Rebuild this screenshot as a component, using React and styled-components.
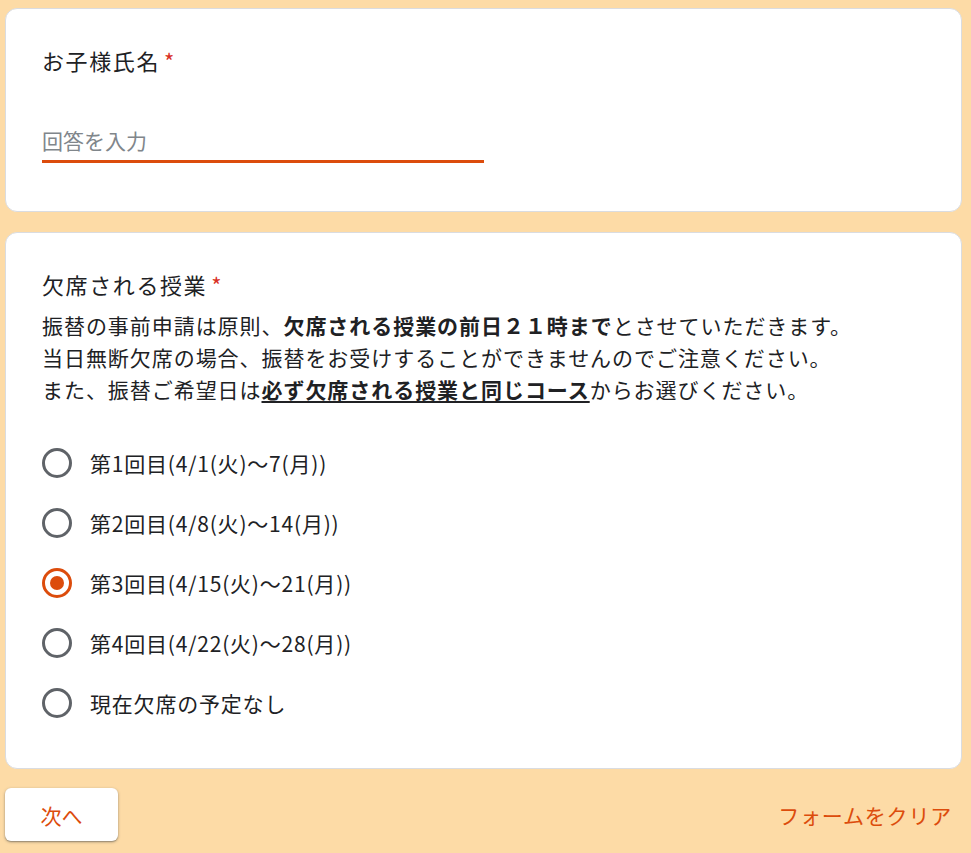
import React, { useState } from 'react';
import styled, { createGlobalStyle } from 'styled-components';

const ACCENT = '#dc4c0c';

const GlobalStyle = createGlobalStyle`
  html, body {
    margin: 0;
    padding: 0;
    background: #fddba6;
  }
  body {
    font-family: "Noto Sans CJK JP", "Noto Sans", sans-serif;
    color: #202124;
  }
`;

const Page = styled.div`
  display: flex;
  flex-direction: column;
  gap: 20px;
  padding: 8px 9px 12px 5px;
`;

const Card = styled.section`
  background: #fff;
  border: 1px solid #dadce0;
  border-radius: 12px;
  padding: 36px 36px ${p => p.$bottom}px;
  display: flex;
  flex-direction: column;
`;

const Title = styled.div`
  font-size: 22px;
  line-height: 30px;
  letter-spacing: 1.6px;
`;

const Required = styled.span`
  color: #d93025;
  margin-left: 4px;
`;

const InputWrap = styled.div`
  margin-top: 50px;
  width: 50%;
  border-bottom: 3px solid ${ACCENT};
  padding-bottom: 5px;
`;

const TextInput = styled.input`
  display: block;
  width: 100%;
  border: none;
  outline: none;
  padding: 0;
  font-family: inherit;
  font-size: 21px;
  line-height: 30px;
  height: 30px;
  color: #202124;
  caret-color: #202124;
  background: transparent;
  &::placeholder {
    color: #80868b;
  }
`;

const Description = styled.div`
  margin-top: 10px;
  font-size: 21px;
  line-height: 32px;
  letter-spacing: 0.95px;
  b {
    font-weight: 700;
  }
  u {
    font-weight: 700;
    text-decoration-thickness: 2px;
    text-underline-offset: 3px;
  }
`;

const Options = styled.div`
  margin-top: 28px;
  display: flex;
  flex-direction: column;
`;

const Option = styled.label`
  height: 60px;
  display: flex;
  align-items: center;
  gap: 18px;
  cursor: pointer;
  font-size: 21px;
  letter-spacing: 0.8px;
`;

const Radio = styled.span`
  width: 30px;
  height: 30px;
  box-sizing: border-box;
  border-radius: 50%;
  border: 3px solid ${p => (p.$checked ? ACCENT : '#5f6368')};
  display: flex;
  align-items: center;
  justify-content: center;
  flex-shrink: 0;
  &::after {
    content: '';
    width: 14px;
    height: 14px;
    border-radius: 50%;
    background: ${ACCENT};
    display: ${p => (p.$checked ? 'block' : 'none')};
  }
`;

const Footer = styled.div`
  display: flex;
  justify-content: space-between;
  align-items: center;
  margin-top: -1px;
`;

const NextButton = styled.button`
  width: 113px;
  height: 53px;
  border: none;
  border-radius: 6px;
  background: #fff;
  box-shadow: 0 1px 3px rgba(60, 64, 67, 0.45), 0 1px 1px rgba(60, 64, 67, 0.25);
  color: ${ACCENT};
  font-family: inherit;
  font-size: 21px;
  cursor: pointer;
`;

const ClearButton = styled.button`
  border: none;
  background: transparent;
  color: ${ACCENT};
  font-family: inherit;
  font-size: 21px;
  letter-spacing: 0.8px;
  padding: 0 10px 0 0;
  cursor: pointer;
`;

const options = [
  '第1回目(4/1(火)〜7(月))',
  '第2回目(4/8(火)〜14(月))',
  '第3回目(4/15(火)〜21(月))',
  '第4回目(4/22(火)〜28(月))',
  '現在欠席の予定なし',
];

export default function App() {
  const [selected, setSelected] = useState(2);

  return (
    <>
      <GlobalStyle />
      <Page>
        <Card $bottom={48}>
          <Title>
            お子様氏名<Required>*</Required>
          </Title>
          <InputWrap>
            <TextInput placeholder="回答を入力" autoFocus />
          </InputWrap>
        </Card>

        <Card $bottom={35}>
          <Title>
            欠席される授業<Required>*</Required>
          </Title>
          <Description>
            振替の事前申請は原則、<b>欠席される授業の前日２１時まで</b>とさせていただきます。
            <br />
            当日無断欠席の場合、振替をお受けすることができませんのでご注意ください。
            <br />
            また、振替ご希望日は<u>必ず欠席される授業と同じコース</u>からお選びください。
          </Description>
          <Options>
            {options.map((label, i) => (
              <Option key={label} onClick={() => setSelected(i)}>
                <Radio $checked={selected === i} />
                {label}
              </Option>
            ))}
          </Options>
        </Card>

        <Footer>
          <NextButton>次へ</NextButton>
          <ClearButton>フォームをクリア</ClearButton>
        </Footer>
      </Page>
    </>
  );
}
